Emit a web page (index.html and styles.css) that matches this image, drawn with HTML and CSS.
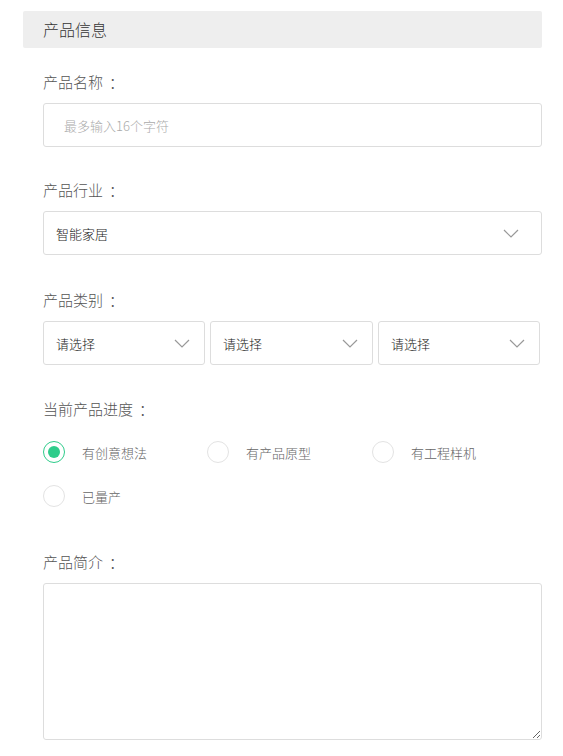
FILE: index.html
```html
<!DOCTYPE html>
<html lang="zh">
<head>
<meta charset="utf-8">
<link rel="stylesheet" href="styles.css">
</head>
<body>
<div class="page">
  <div class="section-title">产品信息</div>
  <div class="form">
    <div class="group g1">
      <div class="label">产品名称<span class="colon">：</span></div>
      <div class="input"><span class="placeholder">最多输入16个字符</span></div>
    </div>
    <div class="group g2">
      <div class="label">产品行业<span class="colon">：</span></div>
      <div class="select wide">
        <span>智能家居</span>
        <svg class="chev" width="16" height="9" viewBox="0 0 16 9"><path d="M1 1 L8 8 L15 1" fill="none" stroke="#999" stroke-width="1.2"/></svg>
      </div>
    </div>
    <div class="group g3">
      <div class="label">产品类别<span class="colon">：</span></div>
      <div class="select-row">
        <div class="select"><span>请选择</span><svg class="chev" width="16" height="9" viewBox="0 0 16 9"><path d="M1 1 L8 8 L15 1" fill="none" stroke="#999" stroke-width="1.2"/></svg></div>
        <div class="select"><span>请选择</span><svg class="chev" width="16" height="9" viewBox="0 0 16 9"><path d="M1 1 L8 8 L15 1" fill="none" stroke="#999" stroke-width="1.2"/></svg></div>
        <div class="select"><span>请选择</span><svg class="chev" width="16" height="9" viewBox="0 0 16 9"><path d="M1 1 L8 8 L15 1" fill="none" stroke="#999" stroke-width="1.2"/></svg></div>
      </div>
    </div>
    <div class="group g4">
      <div class="label">当前产品进度<span class="colon">：</span></div>
      <div class="radios">
        <div class="radio checked"><span class="circle"></span><span class="rtext">有创意想法</span></div>
        <div class="radio"><span class="circle"></span><span class="rtext">有产品原型</span></div>
        <div class="radio"><span class="circle"></span><span class="rtext">有工程样机</span></div>
        <div class="radio"><span class="circle"></span><span class="rtext">已量产</span></div>
      </div>
    </div>
    <div class="group g5">
      <div class="label">产品简介<span class="colon">：</span></div>
      <textarea class="textarea"></textarea>
    </div>
  </div>
</div>
</body>
</html>
```
FILE: styles.css
```css
* { box-sizing: border-box; }
html, body { margin: 0; padding: 0; background: #fff; }
body {
  font-family: "Noto Sans CJK SC", "Noto Sans", sans-serif;
  font-weight: 300;
  color: #333;
}
.page {
  padding: 11px 21px 0 23px;
}
.section-title {
  height: 37px;
  background: #eeeeee;
  border-radius: 2px;
  padding-left: 20px;
  font-size: 16px;
  line-height: 37px;
  color: #333;
}
.form {
  padding-left: 20px;
}
.group { margin-top: 33px; }
.group.g1 { margin-top: 24px; }
.group.g2 { margin-top: 33px; }
.group.g3 { margin-top: 35px; }
.group.g4 { margin-top: 34px; }
.group.g5 { margin-top: 34px; }
.label {
  font-size: 15px;
  line-height: 20px;
  height: 20px;
  color: #555;
  margin-bottom: 11px;
}
.colon {
  display: inline-block;
  margin-left: 6px;
}
.input {
  height: 44px;
  border: 1px solid #dddddd;
  border-radius: 3px;
  display: flex;
  align-items: center;
  padding-left: 20px;
}
.placeholder {
  font-size: 13px;
  color: #aaaaaa;
}
.select {
  height: 44px;
  border: 1px solid #dddddd;
  border-radius: 3px;
  display: flex;
  align-items: center;
  justify-content: space-between;
  padding-left: 12px;
  padding-right: 14px;
  font-size: 13px;
  color: #1a1a1a;
}
.select.wide { padding-right: 22px; }
.select-row {
  display: grid;
  grid-template-columns: 162px 163px 162px;
  gap: 5px;
}
.chev { display: block; }
.radios {
  display: grid;
  grid-template-columns: 164px 165px 165px;
  margin-top: 2px;
}
.radio {
  height: 44px;
  display: flex;
  align-items: center;
}
.circle {
  width: 22px;
  height: 22px;
  border-radius: 50%;
  border: 1px solid #e3e3e3;
  display: flex;
  align-items: center;
  justify-content: center;
  margin-right: 17px;
  flex: none;
}
.radio.checked .circle {
  border: 1px solid #2fcc8b;
}
.radio.checked .circle::after {
  content: "";
  width: 12px;
  height: 12px;
  border-radius: 50%;
  background: #2fcc8b;
}
.rtext {
  font-size: 13px;
  color: #666;
}
.textarea {
  display: block;
  width: 100%;
  height: 157px;
  border: 1px solid #dddddd;
  border-radius: 3px;
  resize: vertical;
  font-family: inherit;
}
```
